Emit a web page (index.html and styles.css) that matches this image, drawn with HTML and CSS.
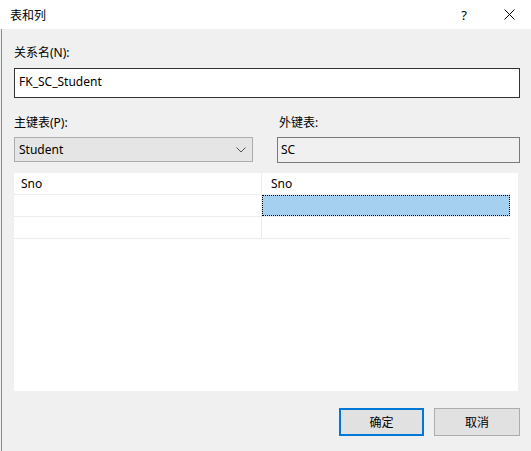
FILE: index.html
```html
<!DOCTYPE html>
<html>
<head>
<meta charset="utf-8">
<link rel="stylesheet" href="styles.css">
</head>
<body>
<div class="dialog">
  <div class="titlebar">
    <span class="title">表和列</span>
    <span class="help">?</span>
    <span class="close">
      <svg width="11" height="11" viewBox="0 0 11 11"><path d="M0.5 0.5 L10.5 10.5 M10.5 0.5 L0.5 10.5" stroke="#000" stroke-width="1" fill="none"/></svg>
    </span>
  </div>
  <div class="body">
    <div class="label name-label">关系名(N):</div>
    <div class="textbox">FK_SC_Student</div>
    <div class="tables">
      <div class="col left">
        <div class="label">主键表(P):</div>
        <div class="combo">
          <span>Student</span>
          <svg width="10" height="6" viewBox="0 0 10 6"><path d="M0.5 0.5 L5 5 L9.5 0.5" stroke="#555" stroke-width="1" fill="none"/></svg>
        </div>
      </div>
      <div class="col right">
        <div class="label">外键表:</div>
        <div class="readonly">SC</div>
      </div>
    </div>
    <div class="grid">
      <div class="row">
        <div class="cell">Sno</div>
        <div class="cell">Sno</div>
      </div>
      <div class="row">
        <div class="cell"></div>
        <div class="cell selected"></div>
      </div>
      <div class="row">
        <div class="cell"></div>
        <div class="cell"></div>
      </div>
    </div>
    <div class="buttons">
      <div class="btn default">确定</div>
      <div class="btn">取消</div>
    </div>
  </div>
</div>
</body>
</html>
```
FILE: styles.css
```css
html, body {
  margin: 0;
  padding: 0;
}
body {
  width: 531px;
  height: 451px;
  overflow: hidden;
  background: #f0f0f0;
  font-family: "Noto Sans", "Noto Sans CJK SC", sans-serif;
  font-size: 12px;
  color: #000;
}
.dialog {
  width: 531px;
  height: 451px;
  display: flex;
  flex-direction: column;
}
.titlebar {
  height: 29px;
  background: #fff;
  display: flex;
  align-items: center;
  flex-shrink: 0;
}
.title {
  margin-left: 10px;
  flex: 1;
}
.help {
  width: 14px;
  text-align: center;
  margin-right: 33px;
  font-size: 13px;
}
.close {
  width: 11px;
  margin-right: 16px;
  display: flex;
}
.body {
  flex: 1;
  background: #f0f0f0;
  border-left: 1px solid #8c8c8c;
  margin-left: 1px;
  padding: 0 11px 0 12px;
  display: flex;
  flex-direction: column;
}
.label {
  height: 18px;
  line-height: 18px;
}
.name-label {
  margin-top: 15px;
}
.textbox {
  margin-top: 6px;
  height: 28px;
  border: 1px solid #333;
  background: #fff;
  line-height: 26px;
  padding-left: 4px;
}
.tables {
  display: flex;
  justify-content: space-between;
  margin-top: 16px;
}
.col .label {
  margin-bottom: 5px;
}
.left {
  width: 239px;
}
.right {
  width: 243px;
}
.right .label {
  margin-left: 2px;
}
.combo {
  height: 23px;
  border: 1px solid #adadad;
  background: #e5e5e5;
  display: flex;
  align-items: center;
  justify-content: space-between;
  padding: 0 6px 0 4px;
}
.readonly {
  height: 24px;
  border: 1px solid #7a7a7a;
  background: #f0f0f0;
  line-height: 24px;
  padding-left: 3px;
}
.grid {
  margin-top: 10px;
  width: 504px;
  height: 218px;
  background: #fff;
}
.row {
  display: flex;
  width: 496px;
  height: 21px;
  border-bottom: 1px solid #ececec;
}
.cell {
  box-sizing: border-box;
  height: 21px;
  line-height: 21px;
  padding-left: 7px;
}
.cell:first-child {
  width: 248px;
  border-right: 1px solid #ececec;
}
.cell:last-child {
  width: 248px;
  padding-left: 9px;
}
.cell.selected {
  background: #a6d0f0;
  outline: 1px dotted #000;
  outline-offset: -1px;
}
.buttons {
  display: flex;
  justify-content: flex-end;
  gap: 10px;
  margin-top: 17px;
}
.btn {
  box-sizing: border-box;
  width: 86px;
  height: 28px;
  border: 1px solid #adadad;
  background: #e1e1e1;
  display: flex;
  align-items: center;
  justify-content: center;
}
.btn.default {
  width: 85px;
  border: 2px solid #0078d7;
}
```
